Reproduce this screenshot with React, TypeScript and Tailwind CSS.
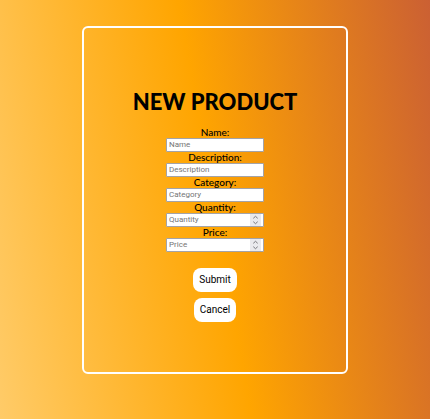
type Field = { id: string; label: string; type: "text" | "number" };

const fields: Field[] = [
  { id: "name", label: "Name", type: "text" },
  { id: "description", label: "Description", type: "text" },
  { id: "category", label: "Category", type: "text" },
  { id: "quantity", label: "Quantity", type: "number" },
  { id: "price", label: "Price", type: "number" },
];

function Stepper() {
  return (
    <svg
      viewBox="0 0 11 12"
      className="h-3 w-[11px] shrink-0 bg-[#e9e9ed]"
      fill="none"
      stroke="#77777d"
      strokeWidth="1"
      aria-hidden="true"
    >
      <path d="M3.3 4.3 5.5 2.3 7.7 4.3" />
      <path d="M3.3 7.7 5.5 9.7 7.7 7.7" />
    </svg>
  );
}

function FormField({ id, label, type }: Field) {
  return (
    <div className="flex flex-col items-center">
      <label htmlFor={id} className="text-[10px] font-medium leading-[11px]">
        {label}:
      </label>
      <div className="flex h-[14px] w-[98px] items-center rounded-[1px] border border-[#a3a3a8] bg-white pr-[2px]">
        <input
          id={id}
          type={type}
          placeholder={label}
          className="h-3 w-full min-w-0 appearance-none bg-transparent pl-[2px] font-[Roboto,sans-serif] text-[8px] leading-3 text-black outline-none [-moz-appearance:textfield] placeholder:text-[#757575] [&::-webkit-inner-spin-button]:appearance-none"
        />
        {type === "number" && <Stepper />}
      </div>
    </div>
  );
}

const buttonClass =
  "h-6 rounded-lg bg-white px-[6px] font-[Roboto,sans-serif] text-[10px] leading-4 text-black";

export default function App() {
  return (
    <main className="min-h-screen bg-[linear-gradient(80deg,#ffcb68,#ffa500_50%,#cb6033)] px-[82px] pt-[26px] pb-[45px] font-[Lato,sans-serif] text-black">
      <form
        className="flex flex-col items-center rounded-md border-2 border-white pt-[60px] pb-[50px]"
        onSubmit={(event) => event.preventDefault()}
      >
        <h1 className="text-[22px] font-black leading-7">NEW PRODUCT</h1>
        <div className="mt-[11px] flex flex-col">
          {fields.map((field) => (
            <FormField key={field.id} {...field} />
          ))}
        </div>
        <div className="mt-4 flex flex-col items-center gap-[6px]">
          <button type="submit" className={buttonClass}>
            Submit
          </button>
          <button type="button" className={buttonClass}>
            Cancel
          </button>
        </div>
      </form>
    </main>
  );
}
